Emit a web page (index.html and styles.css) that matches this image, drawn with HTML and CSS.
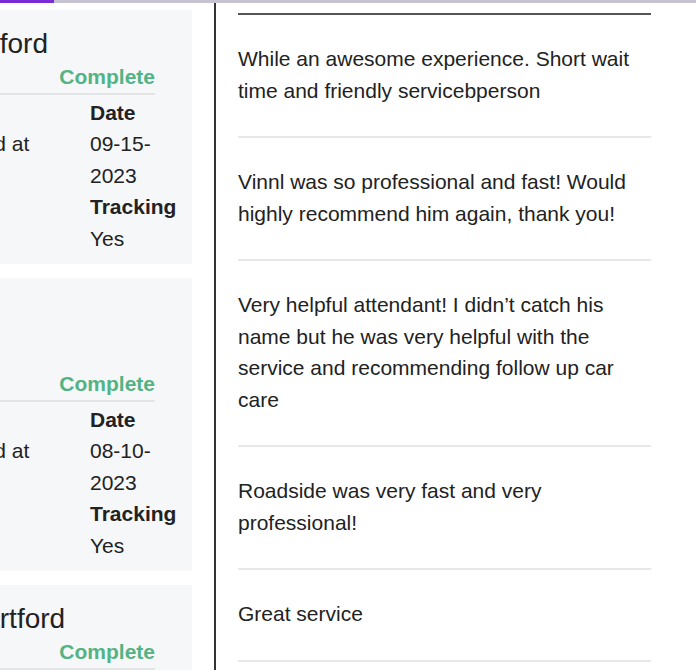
FILE: index.html
```html
<!DOCTYPE html>
<html lang="en">
<head>
  <meta charset="UTF-8" />
  <meta name="viewport" content="width=device-width, initial-scale=1.0"/>
  <title>Service History</title>
  <link rel="stylesheet" href="styles.css">
</head>
<body>
  <div class="progress-track">
    <div class="progress-fill"></div>
  </div>

  <div class="layout">
    <div class="jobs">
      <div class="job-card">
        <h2 class="job-title">Milford</h2>
        <div class="job-status">Complete</div>
        <div class="job-details">
          <span></span>
          <strong>Date</strong>
          <span>Paid at</span>
          <span>09-15-2023</span>
          <span></span>
          <strong>Tracking</strong>
          <span></span>
          <span>Yes</span>
        </div>
      </div>

      <div class="job-card">
        <h2 class="job-title job-title-blank"></h2>
        <div class="job-status">Complete</div>
        <div class="job-details">
          <span></span>
          <strong>Date</strong>
          <span>Paid at</span>
          <span>08-10-2023</span>
          <span></span>
          <strong>Tracking</strong>
          <span></span>
          <span>Yes</span>
        </div>
      </div>

      <div class="job-card">
        <h2 class="job-title">Hartford</h2>
        <div class="job-status">Complete</div>
        <div class="job-details">
          <span></span>
          <strong>Date</strong>
          <span>Paid at</span>
          <span>07-22-2023</span>
        </div>
      </div>
    </div>

    <div class="reviews">
      <ul class="review-list">
        <li>While an awesome experience. Short wait time and friendly servicebperson</li>
        <li>Vinnl was so professional and fast! Would highly recommend him again, thank you!</li>
        <li>Very helpful attendant! I didn’t catch his name but he was very helpful with the service and recommending follow up car care</li>
        <li>Roadside was very fast and very professional!</li>
        <li>Great service</li>
      </ul>
    </div>
  </div>
</body>
</html>
```

FILE: styles.css
```css
body {
  margin: 0;
  font-family: 'Liberation Sans', Arial, sans-serif;
  font-size: 21px;
  line-height: 1.5;
  color: #222;
  background: white;
  overflow: hidden;
}

.progress-track {
  height: 3px;
  background: #c6c2cf;
}

.progress-fill {
  width: 54px;
  height: 100%;
  background: #7a2bd6;
}

.layout {
  display: flex;
  height: 667px;
}

/* job cards sit partly off screen on the left */
.jobs {
  width: 192px;
  flex-shrink: 0;
  margin-right: 22px;
  padding-top: 7px;
}

.job-card {
  margin-left: -50px;
  margin-bottom: 14px;
  padding: 16px 17px 10px 14px;
  background: #f6f7f9;
}

.job-title {
  margin: 0;
  font-size: 28px;
  font-weight: normal;
  line-height: 35px;
  white-space: nowrap;
}

.job-title-blank {
  height: 74px;
}

.job-status {
  margin-right: 20px;
  font-weight: bold;
  text-align: right;
  color: #52b385;
  border-bottom: 2px solid #e3e4e6;
}

.job-details {
  display: grid;
  grid-template-columns: 1fr 85px;
  column-gap: 6px;
  margin-top: 2px;
}

.reviews {
  flex: 1;
  border-left: 2px solid #333;
  padding: 10px 45px 0 22px;
}

.review-list {
  list-style: none;
  margin: 0;
  padding: 0;
  border-top: 2px solid #555;
}

.review-list li {
  padding: 28px 0 30px;
  border-bottom: 2px solid #e8e8e8;
}
```
